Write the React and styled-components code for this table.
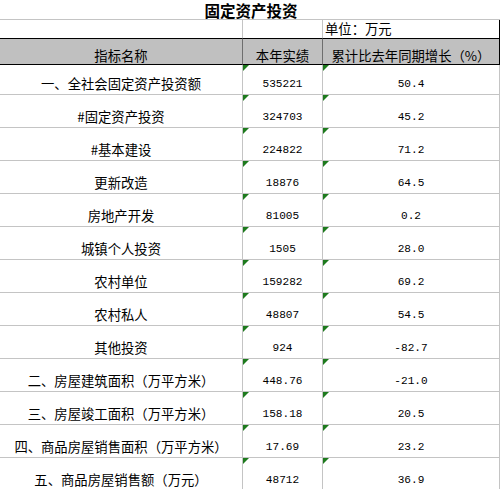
import React from 'react'
import styled, { createGlobalStyle, css } from 'styled-components'

const GlobalStyle = createGlobalStyle`
    * { box-sizing: border-box; }
    html, body {
        margin: 0;
        padding: 0;
        background: #fff;
        overflow: hidden;
    }
`

const cjk = `"Noto Sans CJK SC", "DejaVu Sans", sans-serif`
const mono = `"Liberation Mono", "DejaVu Sans Mono", monospace`
const gridLine = '#c4c4c4'

const Sheet = styled.div`
    display: grid;
    grid-template-columns: 243px 80px 177px;
    grid-template-rows: 20px 18px 27px 30px repeat(12, 33px);
    width: 500px;
    font-family: ${cjk};
    font-size: 13.33px;
    color: #000;
`

const Title = styled.div`
    grid-column: 1 / 4;
    display: flex;
    align-items: center;
    justify-content: center;
    padding: 1px 0 0 2px;
    font-size: 15.5px;
    font-weight: bold;
    line-height: 17px;
    border-bottom: 1px solid ${gridLine};
`

const UnitCell = styled.div`
    display: flex;
    align-items: center;
    padding-left: 2px;
    line-height: 16px;
    border-right: 1px solid ${props => (props.$last ? '#000' : gridLine)};
`

const HeadCell = styled.div`
    display: flex;
    align-items: flex-end;
    justify-content: center;
    line-height: 16px;
    padding-bottom: 0;
    background: #c0c0c0;
    border-top: 1px solid #000;
    border-bottom: 1px solid #000;
    border-right: 1px solid ${props => (props.$last ? '#000' : '#6e6e6e')};
    white-space: nowrap;
`

const Cell = styled.div`
    position: relative;
    display: flex;
    align-items: flex-end;
    justify-content: center;
    line-height: 16px;
    padding-bottom: 2px;
    border-right: 1px solid ${gridLine};
    border-bottom: 1px solid ${gridLine};
    white-space: nowrap;
    ${props => props.$num && css`
        font-family: ${mono};
        font-size: 11.1px;
    `}
    ${props => props.$mark && css`
        &::before {
            content: '';
            position: absolute;
            top: 0;
            left: 0;
            border-top: 6px solid #1d7a1d;
            border-right: 6px solid transparent;
        }
    `}
`

const rows = [
    ['一、全社会固定资产投资额', '535221', '50.4'],
    ['#固定资产投资', '324703', '45.2'],
    ['#基本建设', '224822', '71.2'],
    ['更新改造', '18876', '64.5'],
    ['房地产开发', '81005', '0.2'],
    ['城镇个人投资', '1505', '28.0'],
    ['农村单位', '159282', '69.2'],
    ['农村私人', '48807', '54.5'],
    ['其他投资', '924', '-82.7'],
    ['二、房屋建筑面积（万平方米）', '448.76', '-21.0'],
    ['三、房屋竣工面积（万平方米）', '158.18', '20.5'],
    ['四、商品房屋销售面积（万平方米）', '17.69', '23.2'],
    ['五、商品房屋销售额（万元）', '48712', '36.9'],
]

function App() {
  return (
    <>
        <GlobalStyle />
        <Sheet>
            <Title>固定资产投资</Title>
            <UnitCell />
            <UnitCell />
            <UnitCell $last>单位：万元</UnitCell>
            <HeadCell>指标名称</HeadCell>
            <HeadCell>本年实绩</HeadCell>
            <HeadCell $last>累计比去年同期增长（%）</HeadCell>
            {rows.map(([name, value, growth]) => (
                <React.Fragment key={name}>
                    <Cell>{name}</Cell>
                    <Cell $num $mark>{value}</Cell>
                    <Cell $num $mark>{growth}</Cell>
                </React.Fragment>
            ))}
        </Sheet>
    </>
  )
}

export default App
